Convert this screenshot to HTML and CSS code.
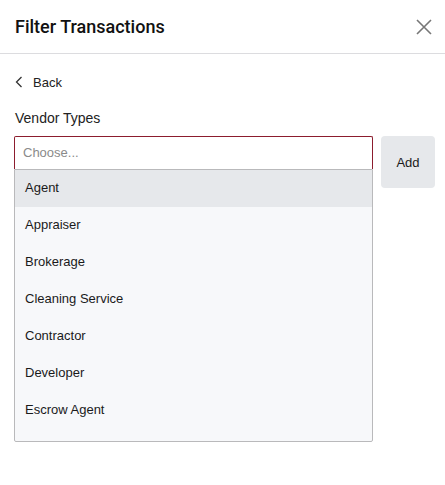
FILE: index.html
```html
<!DOCTYPE html>
<html lang="en">
<head>
    <meta charset="UTF-8">
    <meta name="viewport" content="width=device-width, initial-scale=1.0">
    <title>Filter Transactions</title>
    <link rel="stylesheet" href="styles.css">
</head>
<body>
    <div class="panel">
        <div class="panel-header">
            <h2>Filter Transactions</h2>
            <button class="close-btn" aria-label="Close">
                <svg width="16" height="16" viewBox="0 0 16 16">
                    <path d="M1 1L15 15M15 1L1 15" stroke="#777" stroke-width="1.6" fill="none"/>
                </svg>
            </button>
        </div>

        <div class="panel-body">
            <a href="#" class="back-link">
                <svg width="8" height="12" viewBox="0 0 8 12">
                    <path d="M6.5 1L1.5 6L6.5 11" stroke="#333" stroke-width="1.3" fill="none"/>
                </svg>
                Back
            </a>

            <label class="field-label">Vendor Types</label>
            <div class="picker-row">
                <div class="picker">
                    <input type="text" class="picker-input" placeholder="Choose...">
                    <ul class="picker-menu">
                        <li class="active">Agent</li>
                        <li>Appraiser</li>
                        <li>Brokerage</li>
                        <li>Cleaning Service</li>
                        <li>Contractor</li>
                        <li>Developer</li>
                        <li>Escrow Agent</li>
                    </ul>
                </div>
                <button class="add-btn">Add</button>
            </div>
        </div>
    </div>
</body>
</html>
```
FILE: styles.css
```css
body {
    margin: 0;
    font-family: "Liberation Sans", Arial, sans-serif;
    color: #1a1a1a;
    background-color: #fff;
}

.panel-header {
    display: flex;
    justify-content: space-between;
    align-items: center;
    height: 53px;
    padding: 0 9px 0 15px;
    border-bottom: 1px solid #dcdcdf;
}

.panel-header h2 {
    margin: 0;
    font-family: Roboto, "Liberation Sans", sans-serif;
    font-size: 18px;
    font-weight: 500;
    color: #111;
}

.close-btn {
    background: none;
    border: none;
    padding: 4px;
    cursor: pointer;
    display: flex;
}

.panel-body {
    padding: 20px 10px 0 14px;
}

.back-link {
    display: inline-flex;
    align-items: center;
    gap: 10px;
    margin-left: 1px;
    font-size: 13px;
    color: #222;
    text-decoration: none;
}

.field-label {
    display: block;
    margin-top: 18px;
    margin-left: 1px;
    font-size: 14px;
    color: #222;
}

.picker-row {
    display: flex;
    align-items: flex-start;
    gap: 8px;
    margin-top: 10px;
}

.picker {
    flex: 1;
}

.picker-input {
    display: block;
    width: 100%;
    box-sizing: border-box;
    height: 33px;
    padding: 0 8px 2px;
    border: 1px solid #8c1d2e;
    border-bottom: none;
    border-radius: 2px 2px 0 0;
    font-family: inherit;
    font-size: 13px;
    outline: none;
}

.picker-input::placeholder {
    color: #8a8a8a;
}

/* open list sits right under the input, keeps its height when short */
.picker-menu {
    height: 271px;
    margin: 0;
    padding: 0;
    list-style: none;
    overflow: hidden;
    background-color: #f7f8fa;
    border: 1px solid #b9b9bb;
    border-radius: 0 0 2px 2px;
}

.picker-menu li {
    height: 37px;
    line-height: 35px;
    padding: 0 10px;
    font-size: 13px;
    color: #1a1a1a;
}

.picker-menu li.active {
    background-color: #e6e8eb;
}

.add-btn {
    width: 54px;
    height: 52px;
    border: none;
    border-radius: 4px;
    background-color: #e6e8eb;
    font-family: inherit;
    font-size: 13px;
    color: #1a1a1a;
    cursor: pointer;
}
```
